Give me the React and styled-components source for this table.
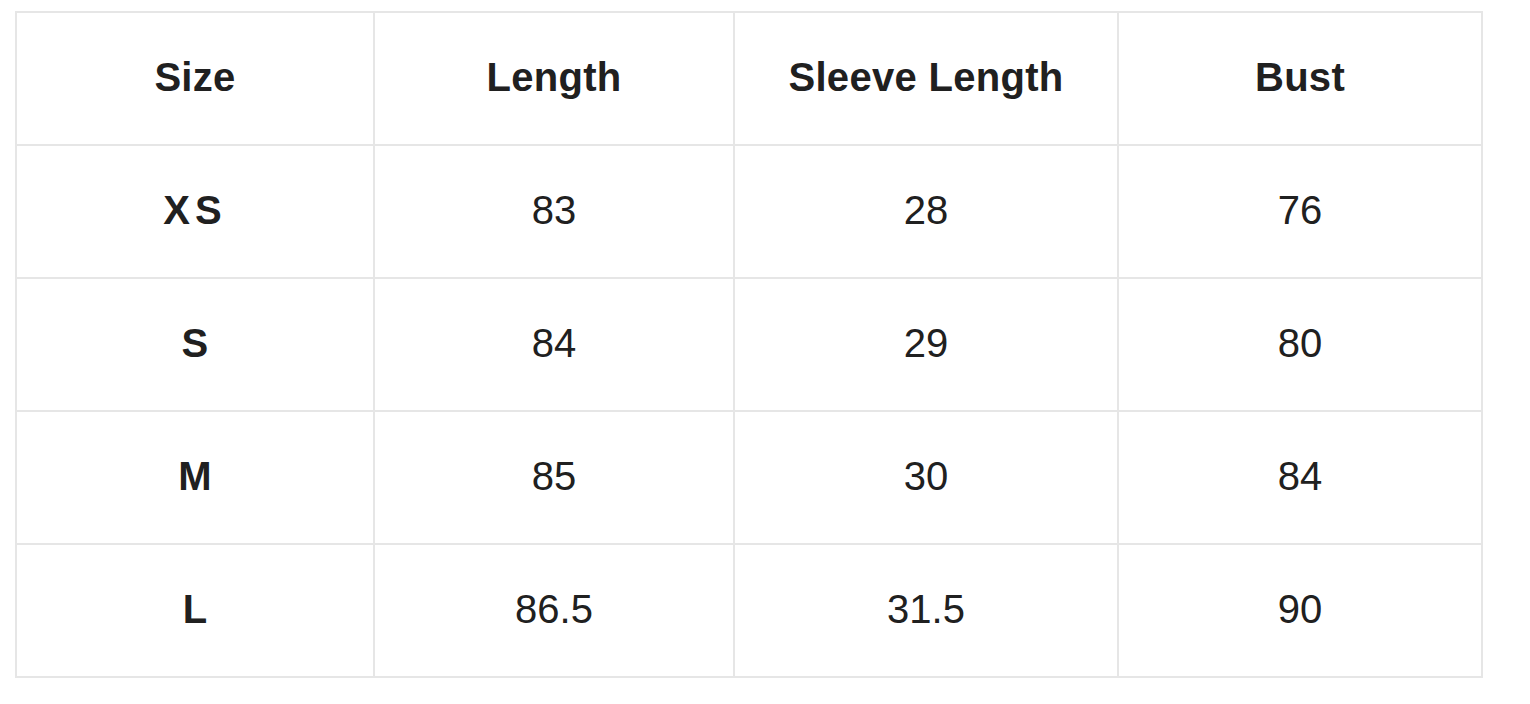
import React from 'react';
import styled, { createGlobalStyle } from 'styled-components';

const GlobalStyle = createGlobalStyle`
  html, body {
    margin: 0;
    padding: 0;
    background: #ffffff;
  }
  body {
    font-family: "Liberation Sans", Arial, sans-serif;
  }
`;

const Page = styled.div`
  padding: 11px 0 0 15px;
`;

const Table = styled.div`
  display: grid;
  grid-template-columns: 358px 360px 384px 364px;
  grid-auto-rows: 133px;
  width: max-content;
  border-top: 2px solid #e6e6e6;
  border-left: 2px solid #e6e6e6;
`;

const Cell = styled.div`
  display: flex;
  align-items: center;
  justify-content: center;
  border-right: 2px solid #e6e6e6;
  border-bottom: 2px solid #e6e6e6;
  font-size: 40px;
  font-weight: ${props => props.bold ? 700 : 400};
  letter-spacing: ${props => props.spaced ? '5px' : props.bold ? '0.3px' : '0'};
  color: #202020;
  padding-bottom: 2px;
`;

const headers = ['Size', 'Length', 'Sleeve Length', 'Bust'];

const rows = [
  ['XS', '83', '28', '76'],
  ['S', '84', '29', '80'],
  ['M', '85', '30', '84'],
  ['L', '86.5', '31.5', '90'],
];

export default function App() {
  return (
    <>
      <GlobalStyle />
      <Page>
        <Table>
          {headers.map(h => (
            <Cell bold key={h}>{h}</Cell>
          ))}
          {rows.map(row => row.map((value, i) => (
            <Cell
              bold={i === 0}
              spaced={i === 0 && value.length > 1}
              key={row[0] + i}
            >
              {value}
            </Cell>
          )))}
        </Table>
      </Page>
    </>
  );
}
